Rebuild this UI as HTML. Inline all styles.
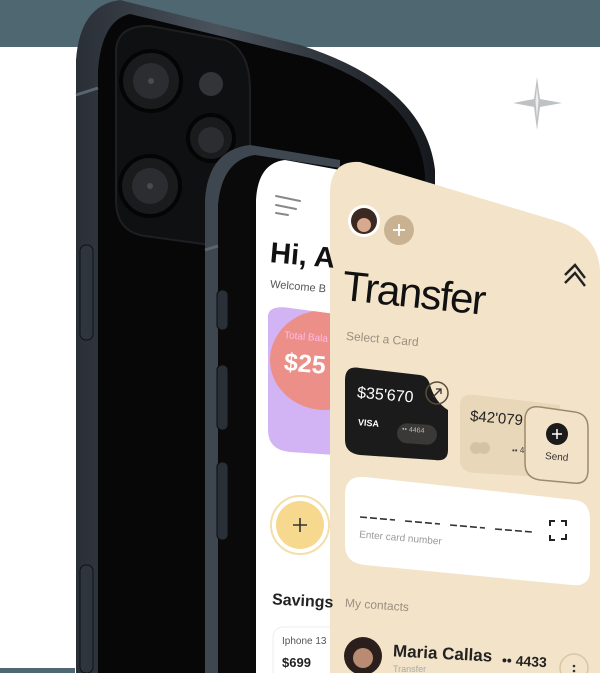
<!DOCTYPE html>
<html><head><meta charset="utf-8"><style>
*{margin:0;padding:0;box-sizing:border-box}
body{width:600px;height:673px;overflow:hidden;background:#fff;position:relative;font-family:"Liberation Sans",sans-serif}
.a{position:absolute}
.t{position:absolute;white-space:nowrap}
</style></head><body>
<div class="a" style="left:0;top:0;width:600px;height:47px;background:#4f6771"></div>
<div class="a" style="left:0;top:668px;width:75px;height:5px;background:#4f6771"></div>
<svg class="a" style="left:510px;top:75px" width="55" height="57"><path d="M27 2 L30 24 L52 28 L30 32 L27 55 L24 32 L3 28 L24 24 Z" fill="#a4a8ab" opacity=".7"/><path d="M27 12 L28.5 26 L27 44 L25.5 26Z" fill="#fff" opacity=".7"/></svg>
<svg class="a" style="left:0;top:0" width="600" height="673">
<defs><linearGradient id="fr" x1="0" x2="1"><stop offset="0" stop-color="#2a2f36"/><stop offset=".4" stop-color="#4a525c"/><stop offset="1" stop-color="#15181c"/></linearGradient>
<clipPath id="pc"><path d="M268 315 Q270 305 290 308 L335 314 L335 455 L290 452 Q268 450 268 430 Z"/></clipPath></defs>
<path d="M76 673 L76 60 Q80 5 120 0 L300 45 Q425 85 435 170 L435 673 Z" fill="url(#fr)"/>
<path d="M98 673 L98 70 Q102 20 130 14 L310 58 Q418 95 425 175 L425 673 Z" fill="#070708"/>
<path d="M116 50 Q118 25 150 26 L225 40 Q250 50 250 90 L250 215 Q248 247 218 246 L145 236 Q116 232 116 200 Z" fill="#0f1012" stroke="#1d1f22" stroke-width="2"/>
<circle cx="151" cy="81" r="30" fill="#1a1b1d" stroke="#050505" stroke-width="4"/><circle cx="151" cy="81" r="18" fill="#2c2d30"/><circle cx="151" cy="81" r="3" fill="#4a4b4e"/>
<circle cx="150" cy="186" r="30" fill="#1a1b1d" stroke="#050505" stroke-width="4"/><circle cx="150" cy="186" r="18" fill="#2c2d30"/><circle cx="150" cy="186" r="3" fill="#4a4b4e"/>
<circle cx="211" cy="138" r="23" fill="#1a1b1d" stroke="#050505" stroke-width="4"/><circle cx="211" cy="140" r="13" fill="#2c2d30"/>
<circle cx="211" cy="84" r="12" fill="#333437"/>
<rect x="80" y="245" width="13" height="95" rx="6" fill="#2f353d" stroke="#111" />
<rect x="80" y="565" width="13" height="108" rx="6" fill="#2f353d" stroke="#111"/>
<path d="M76 95 L98 88" stroke="#5b6570" stroke-width="3"/>
<path d="M205 673 L205 200 Q208 150 250 145 L340 160 L340 673 Z" fill="#3e4650"/>
<path d="M218 673 L218 205 Q222 160 255 155 L340 168 L340 673 Z" fill="#0a0a0b"/>
<path d="M256 673 L256 200 Q258 163 285 160 L340 170 L340 673 Z" fill="#fff"/>
<path d="M205 250 L218 246" stroke="#5b6570" stroke-width="3"/>
<rect x="217" y="290" width="11" height="40" rx="5" fill="#2a3038" stroke="#0d0d0d"/>
<rect x="217" y="365" width="11" height="65" rx="5" fill="#2a3038" stroke="#0d0d0d"/>
<rect x="217" y="462" width="11" height="78" rx="5" fill="#2a3038" stroke="#0d0d0d"/>
<path d="M276 196 L300 201 M276 205 L296 209 M276 213 L288 215" stroke="#888" stroke-width="2" stroke-linecap="round"/>
<g clip-path="url(#pc)"><rect x="260" y="300" width="80" height="160" fill="#d2b4f4"/><ellipse cx="325" cy="360" rx="55" ry="50" fill="#ec8f88"/><ellipse cx="300" cy="350" rx="30" ry="40" fill="#d2b4f4" opacity=".0"/></g>
<circle cx="300" cy="525" r="29" fill="#fff" stroke="#f3dfa9" stroke-width="2"/>
<circle cx="300" cy="525" r="24" fill="#f6d98e"/>
<path d="M293 525 h14 M300 518 v14" stroke="#333" stroke-width="1.6"/>
<rect x="273" y="627" width="70" height="60" rx="10" fill="#fff" stroke="#eee"/>
<path d="M330 673 L330 190 Q332 160 360 162 L560 222 Q598 235 600 270 L600 673 Z" fill="#f3e4c9"/>
<circle cx="364" cy="221" r="16" fill="#fff"/><circle cx="364" cy="221" r="13" fill="#3a2a22"/><circle cx="364" cy="225" r="7" fill="#d8a98f"/>
<circle cx="399" cy="230" r="15" fill="#c9b291"/><path d="M393 230 h12 M399 224 v12" stroke="#fff" stroke-width="1.8"/>
<path d="M565 275 L575 265 L585 278 M565 283 L575 273 L585 286" fill="none" stroke="#222" stroke-width="2.4"/>
<path d="M345 380 Q345 365 360 368 L420 375 Q428 376 430 385 Q435 402 448 410 L448 450 Q448 462 435 460 L360 455 Q345 453 345 440 Z" fill="#1c1b1b"/>
<circle cx="437" cy="393" r="11" fill="none" stroke="#5a4c3a" stroke-width="1.5"/><path d="M433 397 L441 389 M436 389 h5 v5" stroke="#333" stroke-width="1.3" fill="none"/>
<rect x="397" y="424" width="40" height="20" rx="10" fill="#3a3938" transform="rotate(4 417 434)"/>
<path d="M460 405 Q460 393 475 395 L560 405 L560 478 L475 473 Q460 472 460 460 Z" fill="#e9d7b9"/>
<circle cx="476" cy="448" r="6" fill="#d6c3a5"/><circle cx="484" cy="448" r="6" fill="#d6c3a5"/>
<path d="M525 420 Q525 405 540 407 L575 412 Q588 414 588 428 L588 470 Q588 485 573 483 L540 480 Q525 478 525 463 Z" fill="#f2e3c8" stroke="#9c8a6e" stroke-width="1.5"/>
<circle cx="557" cy="434" r="11" fill="#1c1b1b"/><path d="M552 434 h10 M557 429 v10" stroke="#fff" stroke-width="1.5"/>
<path d="M345 495 Q345 475 365 477 L575 500 Q590 502 590 520 L590 570 Q590 587 572 585 L365 565 Q345 563 345 545 Z" fill="#fff"/>
<path d="M360 517 L395 520 M405 521 L440 524 M450 525 L485 528 M495 529 L532 532" stroke="#333" stroke-width="1.6" stroke-dasharray="7 3"/>
<path d="M550 526 v-5 h5 M561 521 h5 v5 M566 534 v5 h-5 M555 540 h-5 v-5" fill="none" stroke="#222" stroke-width="2"/>
<circle cx="363" cy="656" r="19" fill="#2a1f1c"/><circle cx="363" cy="658" r="10" fill="#b98b73"/>
<circle cx="574" cy="668" r="14" fill="none" stroke="#d7c6a6" stroke-width="1.5"/><circle cx="574" cy="666" r="1.3" fill="#333"/><circle cx="574" cy="671" r="1.3" fill="#333"/>
</svg>
<div class="t" style="left:270px;top:240px;font-size:29px;font-weight:bold;color:#111;transform:rotate(5deg)">Hi, A</div>
<div class="t" style="left:270px;top:281px;font-size:11px;color:#555;transform:rotate(5deg)">Welcome B</div>
<div class="t" style="left:284px;top:332px;font-size:10px;color:#fbe;transform:rotate(5deg)">Total Bala</div>
<div class="t" style="left:284px;top:350px;font-size:25px;font-weight:bold;color:#fff;transform:rotate(5deg)">$25</div>
<div class="t" style="left:272px;top:593px;font-size:16px;font-weight:bold;color:#222;transform:rotate(3deg)">Savings</div>
<div class="t" style="left:282px;top:636px;font-size:10px;color:#555">Iphone 13</div>
<div class="t" style="left:282px;top:655px;font-size:13px;font-weight:bold;color:#222">$699</div>
<div class="t" style="left:345px;top:262px;font-size:42px;color:#111;letter-spacing:-1.5px;transform:rotate(6deg);transform-origin:left top">Transfer</div>
<div class="t" style="left:346px;top:332px;font-size:12px;color:#9a8f80;transform:rotate(5deg)">Select a Card</div>
<div class="t" style="left:357px;top:387px;font-size:16px;color:#fff;transform:rotate(5deg)">$35'670</div>
<div class="t" style="left:358px;top:418px;font-size:9px;font-weight:bold;color:#fff;transform:rotate(5deg)">VISA</div>
<div class="t" style="left:402px;top:427px;font-size:7px;color:#bbb;transform:rotate(5deg)">•• 4464</div>
<div class="t" style="left:470px;top:410px;font-size:15px;color:#222;transform:rotate(5deg)">$42'079</div>
<div class="t" style="left:512px;top:446px;font-size:8px;color:#444">•• 4</div>
<div class="t" style="left:545px;top:452px;font-size:10px;color:#333;transform:rotate(5deg)">Send</div>
<div class="t" style="left:359px;top:533px;font-size:10px;color:#999;transform:rotate(5deg)">Enter card number</div>
<div class="t" style="left:345px;top:598px;font-size:12px;color:#9a8f80;transform:rotate(4deg)">My contacts</div>
<div class="t" style="left:393px;top:644px;font-size:17px;font-weight:bold;color:#222;transform:rotate(3deg)">Maria Callas</div>
<div class="t" style="left:393px;top:664px;font-size:9px;color:#aaa">Transfer</div>
<div class="t" style="left:502px;top:653px;font-size:14px;font-weight:bold;color:#222;transform:rotate(3deg)">•• 4433</div>
</body></html>
